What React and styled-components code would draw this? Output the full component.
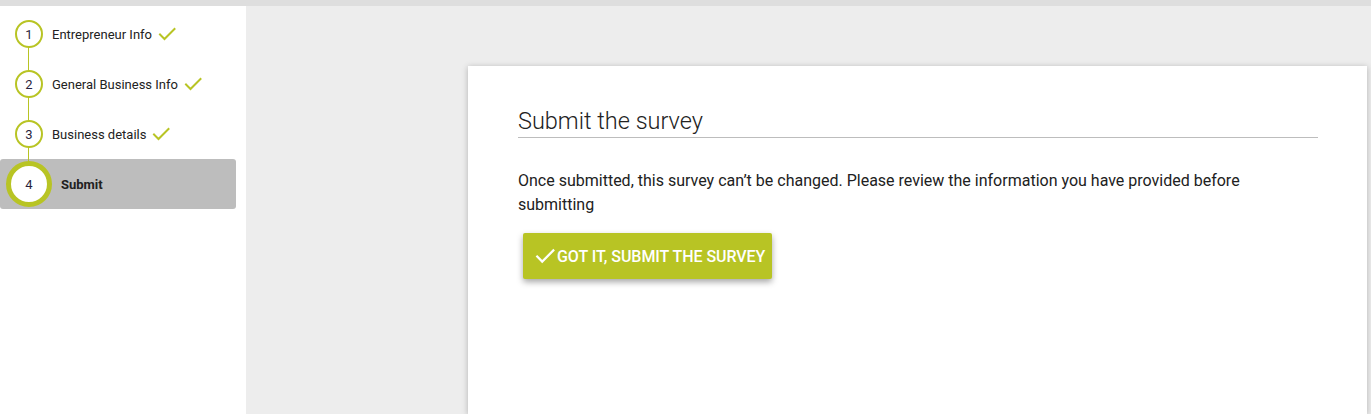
import React from "react";
import styled, { createGlobalStyle } from "styled-components";

const Global = createGlobalStyle`
  html, body { margin: 0; padding: 0; }
  body { font-family: Roboto, "Liberation Sans", sans-serif; background: #ededed; overflow: hidden; }
`;

const OLIVE = "#b8c424";

const Page = styled.div`
  width: 1371px;
  height: 414px;
  display: flex;
  flex-direction: column;
  background: #ededed;
`;

const TopBar = styled.div`
  height: 6px;
  background: #dedede;
  flex-shrink: 0;
`;

const Body = styled.div`
  flex: 1;
  display: flex;
  min-height: 0;
`;

const Sidebar = styled.nav`
  width: 246px;
  background: #fff;
  padding-top: 3px;
  box-sizing: border-box;
  display: flex;
  flex-direction: column;
`;

const StepRow = styled.div`
  position: relative;
  height: 50px;
  width: 236px;
  display: flex;
  align-items: center;
  gap: 9px;
  box-sizing: border-box;
  padding-left: ${(p) => (p.$active ? 6 : 15)}px;
  background: ${(p) => (p.$active ? "#bdbdbd" : "transparent")};
  border-radius: 3px;
`;

const Connector = styled.span`
  position: absolute;
  left: 28px;
  width: 1px;
  top: ${(p) => p.$top}px;
  height: ${(p) => p.$h}px;
  background: ${OLIVE};
`;

const Circle = styled.span`
  position: relative;
  z-index: 1;
  box-sizing: border-box;
  width: ${(p) => (p.$active ? 46 : 28)}px;
  height: ${(p) => (p.$active ? 46 : 28)}px;
  border-radius: 50%;
  border: ${(p) => (p.$active ? 5 : 2)}px solid ${OLIVE};
  background: #fff;
  display: flex;
  align-items: center;
  justify-content: center;
  font-size: 13px;
  color: #2a1f3d;
  flex-shrink: 0;
`;

const Label = styled.span`
  font-size: 13px;
  color: #222;
  font-weight: ${(p) => (p.$active ? 700 : 400)};
  display: flex;
  align-items: center;
  gap: 6px;
`;

const Main = styled.main`
  flex: 1;
  padding: 60px 4px 0 222px;
  display: flex;
  min-width: 0;
`;

const Card = styled.section`
  flex: 1;
  background: #fff;
  box-shadow: 0 1px 6px rgba(0, 0, 0, 0.25);
  padding: 40px 49px 0 50px;
  box-sizing: border-box;
`;

const Title = styled.h2`
  margin: 0;
  font-size: 23.5px;
  font-weight: 300;
  color: #222;
  line-height: 30px;
  padding-bottom: 1px;
  border-bottom: 1px solid #bdbdbd;
`;

const Text = styled.p`
  margin: 31px 0 0;
  font-size: 16px;
  line-height: 24px;
  color: #212121;
  max-width: 760px;
`;

const Button = styled.button`
  margin: 16px 0 0 5px;
  height: 46px;
  padding: 0 7px 0 12px;
  border: none;
  border-radius: 2px;
  background: ${OLIVE};
  color: #fff;
  font-family: Roboto, "Liberation Sans", sans-serif;
  font-size: 16px;
  font-weight: 500;
  letter-spacing: -0.05px;
  text-transform: uppercase;
  display: flex;
  align-items: center;
  gap: 2px;
  box-shadow: 0 3px 6px rgba(0, 0, 0, 0.35);
  cursor: pointer;
`;

const Check = ({ color = OLIVE, size = 18 }) => (
  <svg width={size} height={size} viewBox="0 0 18 18" fill="none">
    <path d="M2 9.5 L6.5 14 L16.5 4" stroke={color} strokeWidth="2" strokeLinecap="square" />
  </svg>
);

const steps = [
  { n: 1, label: "Entrepreneur Info", done: true },
  { n: 2, label: "General Business Info", done: true },
  { n: 3, label: "Business details", done: true },
  { n: 4, label: "Submit", active: true },
];

export default function App() {
  return (
    <Page>
      <Global />
      <TopBar />
      <Body>
        <Sidebar>
          {steps.map((s, i) => (
            <StepRow key={s.n} $active={s.active}>
              {i > 0 && <Connector $top={s.active ? -14 : -12} $h={s.active ? 18 : 24} />}
              <Circle $active={s.active}>{s.n}</Circle>
              <Label $active={s.active}>
                {s.label}
                {s.done && <Check />}
              </Label>
            </StepRow>
          ))}
        </Sidebar>
        <Main>
          <Card>
            <Title>Submit the survey</Title>
            <Text>
              Once submitted, this survey can’t be changed. Please review the information you have provided before submitting
            </Text>
            <Button>
              <Check color="#fff" size={20} />
              Got it, submit the survey
            </Button>
          </Card>
        </Main>
      </Body>
    </Page>
  );
}
